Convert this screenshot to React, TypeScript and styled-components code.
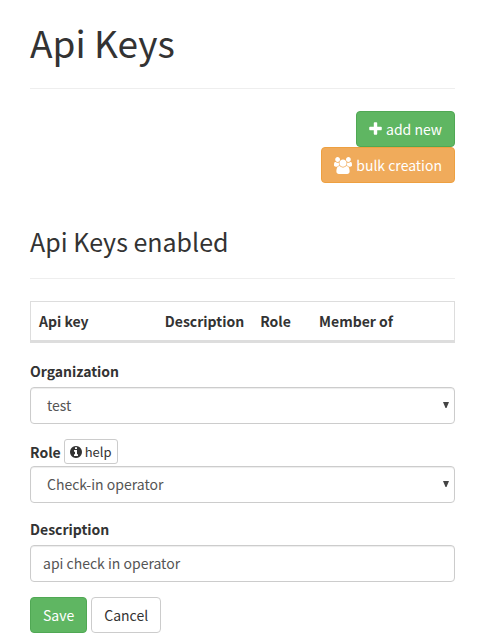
import React from "react";
import styled, { createGlobalStyle } from "styled-components";

const GlobalStyle = createGlobalStyle`
  *, *::before, *::after { box-sizing: border-box; }
  body {
    margin: 0;
    background: #fff;
    color: #333;
    font-family: "Source Sans Pro", "Noto Sans CJK SC", sans-serif;
    font-size: 14px;
    line-height: 22px;
  }
  button, input, select { font: inherit; }
`;

const Page = styled.main`
  padding: 16px 30px 5px;
`;

const PageHeader = styled.header`
  border-bottom: 1px solid #eee;
`;

const Title = styled.h1`
  margin: 0;
  padding: 1px 0 21px;
  font-size: 37px;
  font-weight: 400;
  line-height: 50px;
`;

const Subtitle = styled.h2`
  margin: 0;
  padding: 43px 0 21px;
  font-size: 25px;
  font-weight: 400;
  line-height: 31px;
`;

const Toolbar = styled.div`
  display: flex;
  flex-direction: column;
  align-items: flex-end;
  margin-top: 22px;
`;

const variants = {
  success: { bg: "#5fb662", border: "#50a854", color: "#fff" },
  warning: { bg: "#f0ab5b", border: "#eea040", color: "#fff" },
  plain: { bg: "#fff", border: "#ccc", color: "#333" },
};

const Button = styled.button<{ $variant: keyof typeof variants; $small?: boolean }>`
  display: inline-flex;
  align-items: center;
  gap: ${(p) => (p.$small ? "3px" : "4px")};
  padding: ${(p) => (p.$small ? "1px 5px" : "6px 12px")};
  border: 1px solid ${(p) => variants[p.$variant].border};
  border-radius: ${(p) => (p.$small ? "3px" : "4px")};
  background: ${(p) => variants[p.$variant].bg};
  color: ${(p) => variants[p.$variant].color};
  font-size: ${(p) => (p.$small ? "13px" : "14px")};
  line-height: ${(p) => (p.$small ? "21px" : "22px")};
  white-space: nowrap;
  cursor: pointer;
`;

const KeysTable = styled.table`
  width: 100%;
  margin: 22px 0 17px;
  border: 1px solid #ddd;
  border-bottom-width: 3px;
  border-spacing: 0;
`;

const HeadCell = styled.th<{ $width: string }>`
  width: ${(p) => p.$width};
  padding: 8px;
  text-align: left;
  font-weight: 700;
  white-space: nowrap;
`;

const Field = styled.div`
  margin-bottom: 15px;
`;

const LabelRow = styled.div`
  display: flex;
  align-items: center;
  gap: 3px;
  margin-bottom: 5px;
`;

const HelpRow = styled(LabelRow)`
  margin-bottom: 2px;
`;

const Label = styled.label`
  font-weight: 700;
`;

const controlStyle = `
  display: block;
  width: 100%;
  height: 37px;
  border: 1px solid #ccc;
  border-radius: 4px;
  background: #fff;
  box-shadow: inset 0 1px 1px rgba(0, 0, 0, 0.075);
  color: #555;
`;

const TextInput = styled.input`
  ${controlStyle}
  padding: 5px 12px 7px;
`;

const SelectBox = styled.div`
  position: relative;
`;

const Select = styled.select`
  ${controlStyle}
  appearance: none;
  padding: 5px 24px 7px 16px;
`;

const Arrow = styled.svg`
  position: absolute;
  top: 15px;
  right: 6px;
  width: 6px;
  height: 6px;
  fill: #444;
  pointer-events: none;
`;

const Actions = styled.div`
  display: flex;
  gap: 4px;
`;

const Icon = styled.svg`
  flex: none;
  fill: currentColor;
`;

const PlusIcon = () => (
  <Icon width="13" height="16" viewBox="192 0 1408 1792" aria-hidden="true">
    <path d="M1600 736v192q0 40-28 68t-68 28h-416v416q0 40-28 68t-68 28h-192q-40 0-68-28t-28-68v-416h-416q-40 0-68-28t-28-68v-192q0-40 28-68t68-28h416v-416q0-40 28-68t68-28h192q40 0 68 28t28 68v416h416q40 0 68 28t28 68z" />
  </Icon>
);

const UsersIcon = () => (
  <Icon width="18" height="17" viewBox="-64 0 1920 1792" aria-hidden="true">
    <path d="M529 896q-162 5-265 128h-134q-82 0-138-40.500t-56-118.500q0-353 124-353 6 0 43.500 21t97.500 42.500 119 21.500q67 0 133-23-5 37-5 66 0 139 81 256zm1071 637q0 120-73 189.500t-194 69.500h-874q-121 0-194-69.500t-73-189.500q0-53 3.500-103.500t14-109 26.500-108.500 43-97.500 62-81 85.500-53.500 111.500-20q10 0 43 21.500t73 48 107 48 135 21.500 135-21.500 107-48 73-48 43-21.500q61 0 111.500 20t85.500 53.500 62 81 43 97.500 26.500 108.500 14 109 3.500 103.500zm-1024-1277q0 106-75 181t-181 75-181-75-75-181 75-181 181-75 181 75 75 181zm704 384q0 159-112.500 271.500t-271.500 112.500-271.500-112.500-112.500-271.500 112.500-271.500 271.500-112.500 271.500 112.500 112.500 271.500zm576 225q0 78-56 118.500t-138 40.500h-134q-103-123-265-128 81-117 81-256 0-29-5-66 66 23 133 23 59 0 119-21.500t97.500-42.500 43.500-21q124 0 124 353zm-128-609q0 106-75 181t-181 75-181-75-75-181 75-181 181-75 181 75 75 181z" />
  </Icon>
);

const InfoIcon = () => (
  <Icon width="12" height="12" viewBox="128 128 1536 1536" aria-hidden="true">
    <path d="M1152 1376v-160q0-14-9-23t-23-9h-96v-512q0-14-9-23t-23-9h-320q-14 0-23 9t-9 23v160q0 14 9 23t23 9h96v320h-96q-14 0-23 9t-9 23v160q0 14 9 23t23 9h448q14 0 23-9t9-23zm-128-896v-160q0-14-9-23t-23-9h-192q-14 0-23 9t-9 23v160q0 14 9 23t23 9h192q14 0 23-9t9-23zm640 416q0 209-103 385.500t-279.500 279.500-385.500 103-385.500-103-279.500-279.500-103-385.500 103-385.500 279.500-279.500 385.500-103 385.500 103 279.500 279.500 103 385.500z" />
  </Icon>
);

const columns = [
  { name: "Api key", width: "30%" },
  { name: "Description", width: "22%" },
  { name: "Role", width: "14%" },
  { name: "Member of", width: "34%" },
];

type DropDownProps = { id: string; value: string };

const DropDown = ({ id, value }: DropDownProps) => (
  <SelectBox>
    <Select id={id} defaultValue={value}>
      <option value={value}>{value}</option>
    </Select>
    <Arrow viewBox="0 0 6 6" aria-hidden="true">
      <path d="M0 0h6L3.500 6h-1z" />
    </Arrow>
  </SelectBox>
);

export default function App() {
  return (
    <>
      <GlobalStyle />
      <Page>
        <PageHeader>
          <Title>Api Keys</Title>
        </PageHeader>
        <Toolbar>
          <Button type="button" $variant="success">
            <PlusIcon />
            add new
          </Button>
          <Button type="button" $variant="warning">
            <UsersIcon />
            bulk creation
          </Button>
        </Toolbar>
        <PageHeader>
          <Subtitle>Api Keys enabled</Subtitle>
        </PageHeader>
        <KeysTable>
          <thead>
            <tr>
              {columns.map((c) => (
                <HeadCell key={c.name} scope="col" $width={c.width}>
                  {c.name}
                </HeadCell>
              ))}
            </tr>
          </thead>
        </KeysTable>
        <form onSubmit={(e) => e.preventDefault()}>
          <Field>
            <LabelRow>
              <Label htmlFor="organization">Organization</Label>
            </LabelRow>
            <DropDown id="organization" value="test" />
          </Field>
          <Field>
            <HelpRow>
              <Label htmlFor="role">Role</Label>
              <Button type="button" $variant="plain" $small>
                <InfoIcon />
                help
              </Button>
            </HelpRow>
            <DropDown id="role" value="Check-in operator" />
          </Field>
          <Field>
            <LabelRow>
              <Label htmlFor="description">Description</Label>
            </LabelRow>
            <TextInput id="description" type="text" defaultValue="api check in operator" />
          </Field>
          <Actions>
            <Button type="submit" $variant="success">Save</Button>
            <Button type="button" $variant="plain">Cancel</Button>
          </Actions>
        </form>
      </Page>
    </>
  );
}
